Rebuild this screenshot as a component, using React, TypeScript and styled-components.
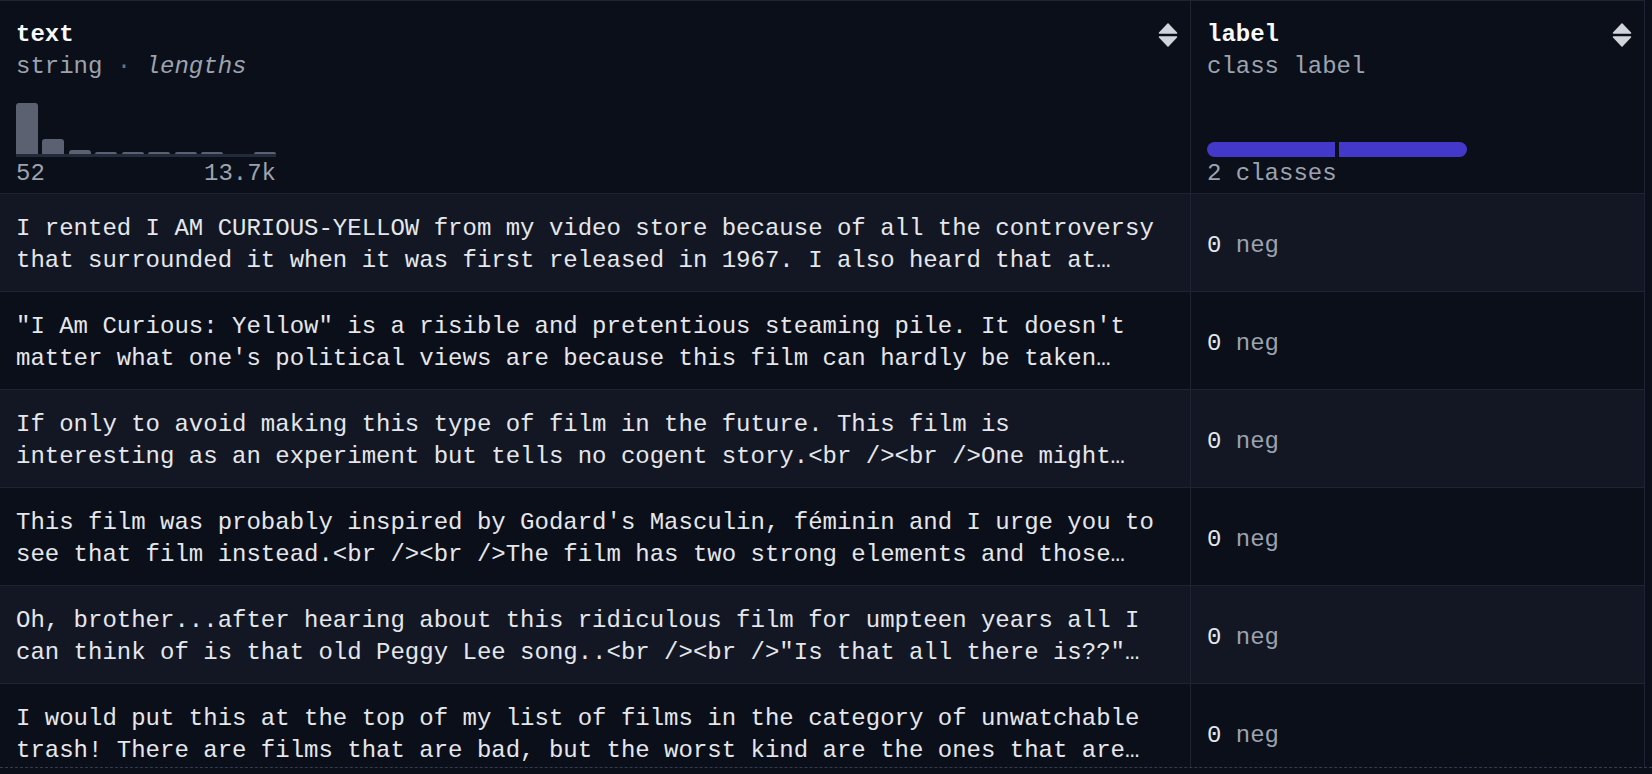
import React from "react";
import styled, { createGlobalStyle } from "styled-components";

const GlobalStyle = createGlobalStyle`
    html, body {
        margin: 0;
        padding: 0;
        background: #0b0f19;
    }
`;

type Row = { text: string; label: number; name: string };

const rows: Row[] = [
    {
        text: "I rented I AM CURIOUS-YELLOW from my video store because of all the controversy that surrounded it when it was first released in 1967. I also heard that at…",
        label: 0,
        name: "neg",
    },
    {
        text: "\"I Am Curious: Yellow\" is a risible and pretentious steaming pile. It doesn't matter what one's political views are because this film can hardly be taken…",
        label: 0,
        name: "neg",
    },
    {
        text: "If only to avoid making this type of film in the future. This film is interesting as an experiment but tells no cogent story.<br /><br />One might…",
        label: 0,
        name: "neg",
    },
    {
        text: "This film was probably inspired by Godard's Masculin, féminin and I urge you to see that film instead.<br /><br />The film has two strong elements and those…",
        label: 0,
        name: "neg",
    },
    {
        text: "Oh, brother...after hearing about this ridiculous film for umpteen years all I can think of is that old Peggy Lee song..<br /><br />\"Is that all there is??\"…",
        label: 0,
        name: "neg",
    },
    {
        text: "I would put this at the top of my list of films in the category of unwatchable trash! There are films that are bad, but the worst kind are the ones that are…",
        label: 0,
        name: "neg",
    },
];

// bar heights of the lengths histogram, in px
const histogram = [51, 15, 4, 2, 2, 2, 2, 2, 0, 2];

const SortIcon: React.FC = () => (
    <svg width="20" height="24" viewBox="0 0 20 24" fill="#d1d5db">
        <path
            d="M10 1 L18.5 10 L1.5 10 Z"
            stroke="#d1d5db"
            strokeWidth="1.5"
            strokeLinejoin="round"
        />
        <path
            d="M1.5 14 L18.5 14 L10 23 Z"
            stroke="#d1d5db"
            strokeWidth="1.5"
            strokeLinejoin="round"
        />
    </svg>
);

const App: React.FC = () => {
    return (
        <Page>
            <GlobalStyle />
            <Viewport>
                <Table>
                    <HeaderRow>
                        <HeaderCell $divider>
                            <TitleRow>
                                <Title>text</Title>
                                <SortIcon />
                            </TitleRow>
                            <Subtitle>
                                string <Dot>·</Dot> <em>lengths</em>
                            </Subtitle>
                            <Chart>
                                <Bars>
                                    {histogram.map((h, i) => (
                                        <Bar key={i} style={{ height: h }} />
                                    ))}
                                </Bars>
                                <Axis />
                                <Range>
                                    <span>52</span>
                                    <span>13.7k</span>
                                </Range>
                            </Chart>
                        </HeaderCell>
                        <HeaderCell>
                            <TitleRow>
                                <Title>label</Title>
                                <SortIcon />
                            </TitleRow>
                            <Subtitle>class label</Subtitle>
                            <Chart>
                                <ClassBar>
                                    <ClassSegment $first />
                                    <ClassSegment />
                                </ClassBar>
                                <Range>
                                    <span>2 classes</span>
                                </Range>
                            </Chart>
                        </HeaderCell>
                    </HeaderRow>
                    {rows.map((row, i) => (
                        <DataRow key={i} $odd={i % 2 === 0}>
                            <TextCell>{row.text}</TextCell>
                            <LabelCell>
                                {row.label} <Muted>{row.name}</Muted>
                            </LabelCell>
                        </DataRow>
                    ))}
                </Table>
            </Viewport>
        </Page>
    );
};

export default App;

const Page = styled.div`
    width: 1652px;
    height: 774px;
    background: #0b0f19;
    overflow: hidden;
    font-family: "Liberation Mono", "DejaVu Sans Mono", monospace;
    font-size: 24px;
    color: #e5e7eb;
`;

const Viewport = styled.div`
    height: 767px;
    overflow: hidden;
    border-bottom: 1px dashed #343b4d;
`;

const Table = styled.div`
    width: 1645px;
    box-sizing: border-box;
    border-top: 1px solid #1e2433;
    border-right: 1px solid #1e2433;
`;

const HeaderRow = styled.div`
    display: grid;
    grid-template-columns: 1191px 1fr;
    height: 192px;
    background: #0b0f19;
`;

const HeaderCell = styled.div<{ $divider?: boolean }>`
    display: flex;
    flex-direction: column;
    box-sizing: border-box;
    padding: 18px 12px 5px 16px;
    border-right: ${(p) => (p.$divider ? "1px solid #1e2433" : "none")};
`;

const TitleRow = styled.div`
    display: flex;
    justify-content: space-between;
    align-items: center;
    height: 32px;
`;

const Title = styled.span`
    font-weight: 700;
    color: #f9fafb;
    line-height: 32px;
`;

const Subtitle = styled.div`
    color: #9ca3af;
    line-height: 31px;

    em {
        font-style: italic;
    }
`;

const Dot = styled.span`
    color: #6b7280;
`;

const Chart = styled.div`
    margin-top: auto;
    width: 260px;
`;

const Bars = styled.div`
    display: flex;
    align-items: flex-end;
    gap: 4.4px;
    height: 52px;
`;

const Bar = styled.div`
    flex: 1;
    background: #5b6170;
    border-radius: 3px 3px 0 0;
`;

const Axis = styled.div`
    height: 3px;
    background: #232a3a;
`;

const ClassBar = styled.div`
    display: flex;
    gap: 4px;
    height: 15px;
`;

const ClassSegment = styled.div<{ $first?: boolean }>`
    flex: 1;
    background: #4338ca;
    border-radius: ${(p) => (p.$first ? "8px 0 0 8px" : "0 8px 8px 0")};
`;

const Range = styled.div`
    display: flex;
    justify-content: space-between;
    margin-top: 3px;
    line-height: 28px;
    color: #9ca3af;
    white-space: nowrap;
`;

const DataRow = styled.div<{ $odd: boolean }>`
    display: grid;
    grid-template-columns: 1191px 1fr;
    height: 98px;
    box-sizing: border-box;
    border-top: 1px solid #1e2433;
    background: ${(p) => (p.$odd ? "#131724" : "#0b0f19")};
`;

const TextCell = styled.div`
    box-sizing: border-box;
    padding: 5px 20px 0 16px;
    border-right: 1px solid #1e2433;
    display: flex;
    align-items: center;
    line-height: 32px;
    color: #e5e7eb;
    overflow: hidden;
`;

const LabelCell = styled.div`
    padding: 5px 16px 0;
    display: flex;
    align-items: center;
    white-space: pre;
    color: #e5e7eb;
`;

const Muted = styled.span`
    color: #9ca3af;
`;
